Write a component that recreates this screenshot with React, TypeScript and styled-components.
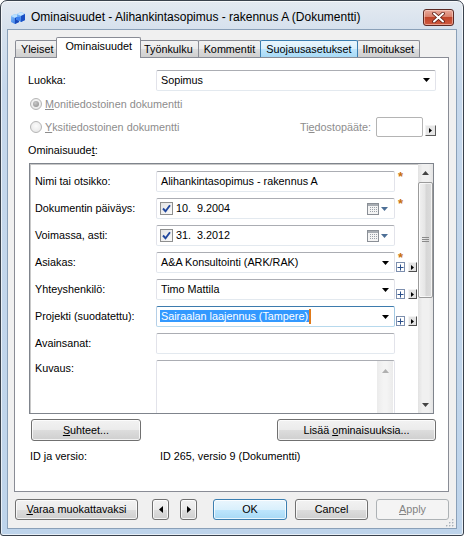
import React from "react";
import styled, { createGlobalStyle, css } from "styled-components";

const GlobalStyle = createGlobalStyle`
  html, body { margin: 0; padding: 0; background: #fff; }
  body {
    font-family: "Liberation Sans", Arial, sans-serif;
    font-size: 10.8px;
    line-height: 13px;
    color: #000;
  }
  * { box-sizing: border-box; }
`;

const Window = styled.div`
  width: 464px;
  height: 536px;
  border: 1px solid #3a424d;
  border-radius: 7px 7px 3px 3px;
  background: linear-gradient(180deg, #e4eaf1 0px, #d6e1ed 28px, #c6d8ec 90px, #bed4eb 100%);
  box-shadow: inset 0 0 0 1px rgba(255, 255, 255, 0.65);
  display: flex;
  flex-direction: column;
  overflow: hidden;
`;

const TitleBar = styled.div`
  height: 28px;
  display: flex;
  align-items: flex-start;
  padding: 0 9px;
`;

const TitleIcon = styled.svg`
  margin-top: 10px;
  flex: none;
`;

const TitleText = styled.div`
  flex: 1;
  margin: 9px 0 0 5px;
  font-size: 12px;
  line-height: 15px;
  color: #000;
  white-space: nowrap;
`;

const CloseButton = styled.div`
  width: 31px;
  height: 17px;
  margin-top: 8px;
  border: 1px solid #5c2a25;
  border-radius: 3px;
  background: linear-gradient(180deg, #e9a99b 0%, #d9826e 45%, #c0442a 50%, #cf5a40 100%);
  box-shadow: inset 0 0 0 1px rgba(255, 220, 210, 0.55);
  display: flex;
  align-items: center;
  justify-content: center;
`;

const Client = styled.div`
  position: relative;
  flex: 1;
  margin: 0 6px 6px 6px;
  border: 1px solid #8aa0b8;
  background: #f0f0f0;
  display: flex;
  flex-direction: column;
  padding: 7px 7px 0 6px;
`;

const TabStrip = styled.div`
  position: relative;
  z-index: 2;
  height: 20px;
  display: flex;
  align-items: flex-end;
  padding-left: 2px;
`;

const Tab = styled.div<{ $active?: boolean; $hover?: boolean }>`
  height: 17px;
  padding: 0 5px;
  margin-left: -1px;
  border: 1px solid #898c95;
  border-bottom: none;
  border-radius: 2px 2px 0 0;
  background: linear-gradient(180deg, #f2f2f2 0%, #ebebeb 50%, #dddddd 51%, #cfcfcf 100%);
  display: flex;
  align-items: center;
  white-space: nowrap;
  ${(p) =>
    p.$hover &&
    css`
      border-color: #3c7fb1;
      z-index: 1;
      background: linear-gradient(180deg, #eaf6fd 0%, #d9f0fc 50%, #bee6fd 51%, #a7d9f5 100%);
    `}
  ${(p) =>
    p.$active &&
    css`
      height: 21px;
      margin: 0 -2px -1px -3px;
      padding: 0 8px 3px 8px;
      background: #fff;
      z-index: 2;
    `}
`;

const Panel = styled.div`
  height: 435px;
  background: #fff;
  border: 1px solid #898c95;
  padding: 11px 12px 0 13px;
  display: flex;
  flex-direction: column;
`;

const FormRow = styled.div`
  display: flex;
  align-items: center;
  height: 22px;
`;

const FieldLabel = styled.div<{ $w?: number }>`
  width: ${(p) => p.$w ?? 128}px;
  flex: none;
  white-space: pre;
`;

const Combo = styled.div<{ $w: number; $focus?: boolean }>`
  width: ${(p) => p.$w}px;
  height: 21px;
  flex: none;
  display: flex;
  align-items: center;
  padding: 0 5px 0 4px;
  border: 1px solid;
  border-color: #abadb3 #e2e3ea #e3e9ef #e2e3ea;
  border-radius: 2px;
  background: #fff;
  white-space: pre;
  ${(p) =>
    p.$focus &&
    css`
      border-color: #3d7bad #a4c9e3 #b7d9ed #b5cfe7;
    `}
`;

const ComboText = styled.span`
  flex: 1;
`;

const Selected = styled.span`
  background: #3399ff;
  color: #fff;
  margin-left: -1px;
  padding: 0 1px;
  line-height: 15px;
`;

const Caret = styled.span`
  display: inline-block;
  width: 2px;
  height: 15px;
  vertical-align: top;
  background: #e07a1a;
`;

const RadioRow = styled.div<{ $h: number; $mt: number }>`
  display: flex;
  align-items: center;
  height: ${(p) => p.$h}px;
  margin-top: ${(p) => p.$mt}px;
  padding-left: 2px;
`;

const Radio = styled.div<{ $checked?: boolean }>`
  width: 12px;
  height: 12px;
  border-radius: 50%;
  border: 1px solid #b5b5b5;
  background: radial-gradient(circle at 50% 40%, #fbfbfb, #e4e4e4);
  margin-right: 3px;
  flex: none;
  display: flex;
  align-items: center;
  justify-content: center;
  &::after {
    content: "";
    display: ${(p) => (p.$checked ? "block" : "none")};
    width: 6px;
    height: 6px;
    border-radius: 50%;
    background: radial-gradient(circle at 40% 35%, #c8c8c8, #8a8a8a);
  }
`;

const Dim = styled.span`
  color: #8d8d8d;
  white-space: pre;
`;

const Spacer = styled.div`
  flex: 1;
`;

const SmallInput = styled.div`
  width: 47px;
  height: 20px;
  margin-left: 5px;
  border: 1px solid #b4b4b4;
  border-radius: 2px;
  background: #fff;
`;

const ArrowBox = styled.div<{ $mb?: number }>`
  width: 11px;
  height: 11px;
  margin-left: 2px;
  margin-bottom: ${(p) => p.$mb ?? 0}px;
  align-self: flex-end;
  border: 1px solid;
  border-color: #f4f4f4 #5a5a5a #5a5a5a #f4f4f4;
  background: #e6e6e6;
  display: flex;
  align-items: center;
  justify-content: center;
  flex: none;
`;

const SectionLabel = styled.div`
  margin-top: 7px;
  height: 13px;
`;

const ListBox = styled.div`
  margin: 6px 0 0 1px;
  width: 405px;
  height: 251px;
  border: 1px solid #7f848c;
  box-shadow: inset 1px 1px 0 #c8c8c8;
  display: flex;
  overflow: hidden;
`;

const ListRows = styled.div`
  flex: 1;
  padding: 7px 0 0 5px;
  display: flex;
  flex-direction: column;
  gap: 6px;
  overflow: hidden;
`;

const PropRow = styled.div<{ $h?: number }>`
  display: grid;
  grid-template-columns: 121px 239px 22px;
  height: ${(p) => p.$h ?? 21}px;
  flex: none;
`;

const PropLabel = styled.div<{ $top?: boolean }>`
  display: flex;
  align-items: ${(p) => (p.$top ? "flex-start" : "center")};
  padding-top: ${(p) => (p.$top ? 2 : 0)}px;
  white-space: nowrap;
`;

const TextBox = styled.div`
  display: flex;
  align-items: center;
  padding: 0 4px;
  border: 1px solid;
  border-color: #abadb3 #e2e3ea #e3e9ef #e2e3ea;
  border-radius: 2px;
  background: #fff;
  white-space: pre;
`;

const DateBox = styled(TextBox)`
  padding: 0 6px 0 3px;
`;

const CheckBox = styled.div`
  width: 13px;
  height: 13px;
  margin-right: 3px;
  border: 1px solid #8e8f8f;
  background: linear-gradient(135deg, #e4e4e4, #fafafa);
  display: flex;
  align-items: center;
  justify-content: center;
  flex: none;
`;

const MemoBox = styled.div`
  display: flex;
  justify-content: flex-end;
  padding: 0 1px 0 0;
  border: 1px solid;
  border-color: #abadb3 #e2e3ea #e3e9ef #e2e3ea;
  border-radius: 2px;
  background: #fff;
`;

const MemoScroll = styled.div`
  width: 16px;
  background: linear-gradient(90deg, #ebebeb, #f4f4f4 40%, #f4f4f4 60%, #ebebeb);
  display: flex;
  justify-content: center;
  padding-top: 8px;
`;

const Extras = styled.div`
  display: flex;
  flex-direction: column;
  justify-content: space-between;
  padding: 0 0 1px 1px;
`;

const Star = styled.span`
  display: block;
  height: 7px;
  margin-left: 2px;
  font-size: 13px;
  font-weight: bold;
  line-height: 11px;
  color: #c8700c;
`;

const MiniButtons = styled.div`
  display: flex;
  gap: 3px;
  margin-top: auto;
`;

const PlusBox = styled.div`
  width: 9px;
  height: 10px;
  border: 1px solid #7d8fae;
  background: #fff;
  display: flex;
  align-items: center;
  justify-content: center;
`;

const MiniArrow = styled.div`
  width: 10px;
  height: 10px;
  border: 1px solid;
  border-color: #f4f4f4 #4e4e4e #4e4e4e #f4f4f4;
  background: #e3e3e3;
  display: flex;
  align-items: center;
  justify-content: center;
`;

const ScrollBar = styled.div`
  width: 15px;
  flex: none;
  display: flex;
  flex-direction: column;
  background: linear-gradient(90deg, #e2e2e2, #f0f0f0 30%, #f0f0f0 70%, #e4e4e4);
`;

const ScrollArrow = styled.div`
  height: 17px;
  display: flex;
  align-items: center;
  justify-content: center;
  flex: none;
`;

const Thumb = styled.div`
  height: 116px;
  margin: 1px 0 0 0;
  border: 1px solid #9b9b9b;
  border-radius: 2px;
  background: linear-gradient(90deg, #f1f1f1, #e6e6e6 45%, #d6d6d6 55%, #dcdcdc);
  box-shadow: inset 0 0 0 1px rgba(255, 255, 255, 0.7);
  display: flex;
  align-items: center;
  justify-content: center;
`;

const ButtonRow = styled.div<{ $mt: number }>`
  display: flex;
  align-items: center;
  margin-top: ${(p) => p.$mt}px;
`;

const Button = styled.div<{ $w: number; $ml?: number; $default?: boolean; $disabled?: boolean; $h?: number }>`
  width: ${(p) => p.$w}px;
  height: ${(p) => p.$h ?? 21}px;
  margin-left: ${(p) => p.$ml ?? 0}px;
  flex: none;
  border: 1px solid #707070;
  border-radius: 3px;
  background: linear-gradient(180deg, #f2f2f2 0%, #ebebeb 50%, #dddddd 51%, #cfcfcf 100%);
  box-shadow: inset 0 0 0 1px rgba(255, 255, 255, 0.75);
  display: flex;
  align-items: center;
  justify-content: center;
  white-space: pre;
  ${(p) =>
    p.$default &&
    css`
      border-color: #3c7fb1;
      background: linear-gradient(180deg, #eaf6fd 0%, #d9f0fc 50%, #bee6fd 51%, #a7d9f5 100%);
    `}
  ${(p) =>
    p.$disabled &&
    css`
      border-color: #adb2b5;
      background: #f4f4f4;
      box-shadow: none;
      color: #838383;
    `}
`;

const InfoRow = styled.div`
  display: flex;
  margin: 9px 0 0 2px;
  height: 13px;
`;

const Grip = styled.svg`
  position: absolute;
  right: 2px;
  bottom: 1px;
`;

const DownTri = ({ color = "#000" }: { color?: string }) => (
  <svg width="7" height="4" viewBox="0 0 7 4">
    <polygon points="0,0 7,0 3.5,4" fill={color} />
  </svg>
);

const UpTri = ({ color = "#444" }: { color?: string }) => (
  <svg width="7" height="4" viewBox="0 0 7 4">
    <polygon points="0,4 7,4 3.5,0" fill={color} />
  </svg>
);

const RightTri = () => (
  <svg width="4" height="7" viewBox="0 0 4 7">
    <polygon points="0,0 4,3.5 0,7" fill="#000" />
  </svg>
);

const CalendarIcon = () => (
  <svg width="21" height="12" viewBox="0 0 21 12">
    <rect x="0.5" y="0.5" width="11" height="11" fill="#f4f4f4" stroke="#8a8f96" />
    <rect x="1" y="1" width="10" height="2" fill="#a7acb2" />
    {[3, 5, 7, 9].map((x) =>
      [4, 6, 8].map((y) => <rect key={`${x}-${y}`} x={x} y={y} width="1" height="1" fill="#9aa0a8" />)
    )}
    <polygon points="14,4 21,4 17.5,8" fill="#4d6f96" />
  </svg>
);

const Check = () => (
  <svg width="9" height="9" viewBox="0 0 9 9">
    <path d="M1 4.5 L3.5 7.2 L8 1.2" fill="none" stroke="#21479e" strokeWidth="1.9" />
  </svg>
);

const Plus = () => (
  <svg width="7" height="7" viewBox="0 0 7 7">
    <path d="M3.5 0.5 V6.5 M0.5 3.5 H6.5" stroke="#2b4f8a" strokeWidth="1" />
  </svg>
);

const Mini = ({ plus = true }: { plus?: boolean }) => (
  <MiniButtons>
    {plus && (
      <PlusBox>
        <Plus />
      </PlusBox>
    )}
    <MiniArrow>
      <svg width="3" height="5" viewBox="0 0 3 5">
        <polygon points="0,0 3,2.5 0,5" fill="#000" />
      </svg>
    </MiniArrow>
  </MiniButtons>
);

const U = styled.span`
  text-decoration: underline;
`;

const App = () => {
  return (
    <>
      <GlobalStyle />
      <Window>
        <TitleBar>
          <TitleIcon width="16" height="14" viewBox="0 0 16 14">
            <defs>
              <linearGradient id="cb" x1="0" y1="0" x2="1" y2="1">
                <stop offset="0" stopColor="#8cc8ff" />
                <stop offset="1" stopColor="#1d5ed8" />
              </linearGradient>
            </defs>
            <polygon points="1,5 5,3 9,5 9,11 5,13 1,11" fill="url(#cb)" />
            <polygon points="1,5 5,3 9,5 5,7" fill="#b8e0ff" />
            <polygon points="5,7 9,5 9,11 5,13" fill="#1848b8" />
            <polygon points="7,3 11,1 15,3 15,9 11,11 7,9" fill="url(#cb)" />
            <polygon points="7,3 11,1 15,3 11,5" fill="#c6e6ff" />
            <polygon points="11,5 15,3 15,9 11,11" fill="#1a4fc4" />
            <rect x="6" y="6" width="4" height="3" fill="#3b7ff0" />
          </TitleIcon>
          <TitleText>Ominaisuudet - Alihankintasopimus - rakennus A (Dokumentti)</TitleText>
          <CloseButton>
            <svg width="13" height="11" viewBox="0 0 13 11">
              <path d="M2 1.5 L11 9.5 M11 1.5 L2 9.5" stroke="#5a1a12" strokeWidth="3.6" strokeLinecap="round" />
              <path d="M2 1.5 L11 9.5 M11 1.5 L2 9.5" stroke="#fff" strokeWidth="2" strokeLinecap="round" />
            </svg>
          </CloseButton>
        </TitleBar>

        <Client>
          <TabStrip>
            <Tab>Yleiset</Tab>
            <Tab $active>Ominaisuudet</Tab>
            <Tab>Työnkulku</Tab>
            <Tab>Kommentit</Tab>
            <Tab $hover>Suojausasetukset</Tab>
            <Tab>Ilmoitukset</Tab>
          </TabStrip>

          <Panel>
            <FormRow>
              <FieldLabel>Luokka:</FieldLabel>
              <Combo $w={280}>
                <ComboText>Sopimus</ComboText>
                <DownTri />
              </Combo>
            </FormRow>

            <RadioRow $h={14} $mt={6}>
              <Radio $checked />
              <Dim>
                <U>M</U>onitiedostoinen dokumentti
              </Dim>
            </RadioRow>

            <RadioRow $h={20} $mt={6}>
              <Radio />
              <Dim>
                <U>Y</U>ksitiedostoinen dokumentti
              </Dim>
              <Spacer />
              <Dim>
                Ti<U>e</U>dostopääte:
              </Dim>
              <SmallInput />
              <ArrowBox $mb={1}>
                <svg width="3" height="5" viewBox="0 0 3 5">
                  <polygon points="0,0 3,2.5 0,5" fill="#000" />
                </svg>
              </ArrowBox>
            </RadioRow>

            <SectionLabel>
              Ominaisuude<U>t</U>:
            </SectionLabel>

            <ListBox>
              <ListRows>
                <PropRow>
                  <PropLabel>Nimi tai otsikko:</PropLabel>
                  <TextBox>Alihankintasopimus - rakennus A</TextBox>
                  <Extras>
                    <Star>*</Star>
                  </Extras>
                </PropRow>

                <PropRow>
                  <PropLabel>Dokumentin päiväys:</PropLabel>
                  <DateBox>
                    <CheckBox>
                      <Check />
                    </CheckBox>
                    <ComboText>10.  9.2004</ComboText>
                    <CalendarIcon />
                  </DateBox>
                  <Extras>
                    <Star>*</Star>
                  </Extras>
                </PropRow>

                <PropRow>
                  <PropLabel>Voimassa, asti:</PropLabel>
                  <DateBox>
                    <CheckBox>
                      <Check />
                    </CheckBox>
                    <ComboText>31.  3.2012</ComboText>
                    <CalendarIcon />
                  </DateBox>
                  <Extras />
                </PropRow>

                <PropRow>
                  <PropLabel>Asiakas:</PropLabel>
                  <Combo $w={239}>
                    <ComboText>A&amp;A Konsultointi (ARK/RAK)</ComboText>
                    <DownTri />
                  </Combo>
                  <Extras>
                    <Star>*</Star>
                    <Mini />
                  </Extras>
                </PropRow>

                <PropRow>
                  <PropLabel>Yhteyshenkilö:</PropLabel>
                  <Combo $w={239}>
                    <ComboText>Timo Mattila</ComboText>
                    <DownTri />
                  </Combo>
                  <Extras>
                    <Mini />
                  </Extras>
                </PropRow>

                <PropRow>
                  <PropLabel>Projekti (suodatettu):</PropLabel>
                  <Combo $w={239} $focus>
                    <ComboText>
                      <Selected>Sairaalan laajennus (Tampere)</Selected>
                      <Caret />
                    </ComboText>
                    <DownTri />
                  </Combo>
                  <Extras>
                    <Mini />
                  </Extras>
                </PropRow>

                <PropRow>
                  <PropLabel>Avainsanat:</PropLabel>
                  <TextBox />
                  <Extras />
                </PropRow>

                <PropRow $h={64}>
                  <PropLabel $top>Kuvaus:</PropLabel>
                  <MemoBox>
                    <MemoScroll>
                      <UpTri color="#b0b0b0" />
                    </MemoScroll>
                  </MemoBox>
                  <Extras />
                </PropRow>
              </ListRows>

              <ScrollBar>
                <ScrollArrow>
                  <UpTri />
                </ScrollArrow>
                <Thumb>
                  <svg width="7" height="6" viewBox="0 0 7 6">
                    <path d="M0 0.5 H7 M0 2.5 H7 M0 4.5 H7" stroke="#8a8a8a" strokeWidth="1" />
                  </svg>
                </Thumb>
                <Spacer />
                <ScrollArrow>
                  <DownTri color="#444" />
                </ScrollArrow>
              </ScrollBar>
            </ListBox>

            <ButtonRow $mt={5}>
              <Button $w={110} $h={22} $ml={3}>
                <span>
                  <U>S</U>uhteet...
                </span>
              </Button>
              <Spacer />
              <Button $w={159} $h={22}>
                <span>
                  Lisää <U>o</U>minaisuuksia...
                </span>
              </Button>
            </ButtonRow>

            <InfoRow>
              <FieldLabel $w={130}>ID ja versio:</FieldLabel>
              <span>ID 265, versio 9 (Dokumentti)</span>
            </InfoRow>
          </Panel>

          <ButtonRow $mt={7}>
            <Button $w={123} $ml={1}>
              <span>
                <U>V</U>araa muokattavaksi
              </span>
            </Button>
            <Button $w={17} $ml={14}>
              <svg width="4" height="7" viewBox="0 0 4 7">
                <polygon points="4,0 0,3.5 4,7" fill="#000" />
              </svg>
            </Button>
            <Button $w={17} $ml={11}>
              <RightTri />
            </Button>
            <Button $w={74} $ml={16} $default>
              OK
            </Button>
            <Button $w={73} $ml={8}>
              Cancel
            </Button>
            <Button $w={73} $ml={8} $disabled>
              <span>
                <U>A</U>pply
              </span>
            </Button>
          </ButtonRow>

          <Grip width="9" height="9" viewBox="0 0 9 9">
            {[
              [7, 1],
              [4, 4],
              [7, 4],
              [1, 7],
              [4, 7],
              [7, 7],
            ].map(([x, y]) => (
              <g key={`${x}-${y}`}>
                <rect x={x + 0.5} y={y + 0.5} width="1.5" height="1.5" fill="#fff" />
                <rect x={x} y={y} width="1.5" height="1.5" fill="#a8b0b8" />
              </g>
            ))}
          </Grip>
        </Client>
      </Window>
    </>
  );
};

export default App;
